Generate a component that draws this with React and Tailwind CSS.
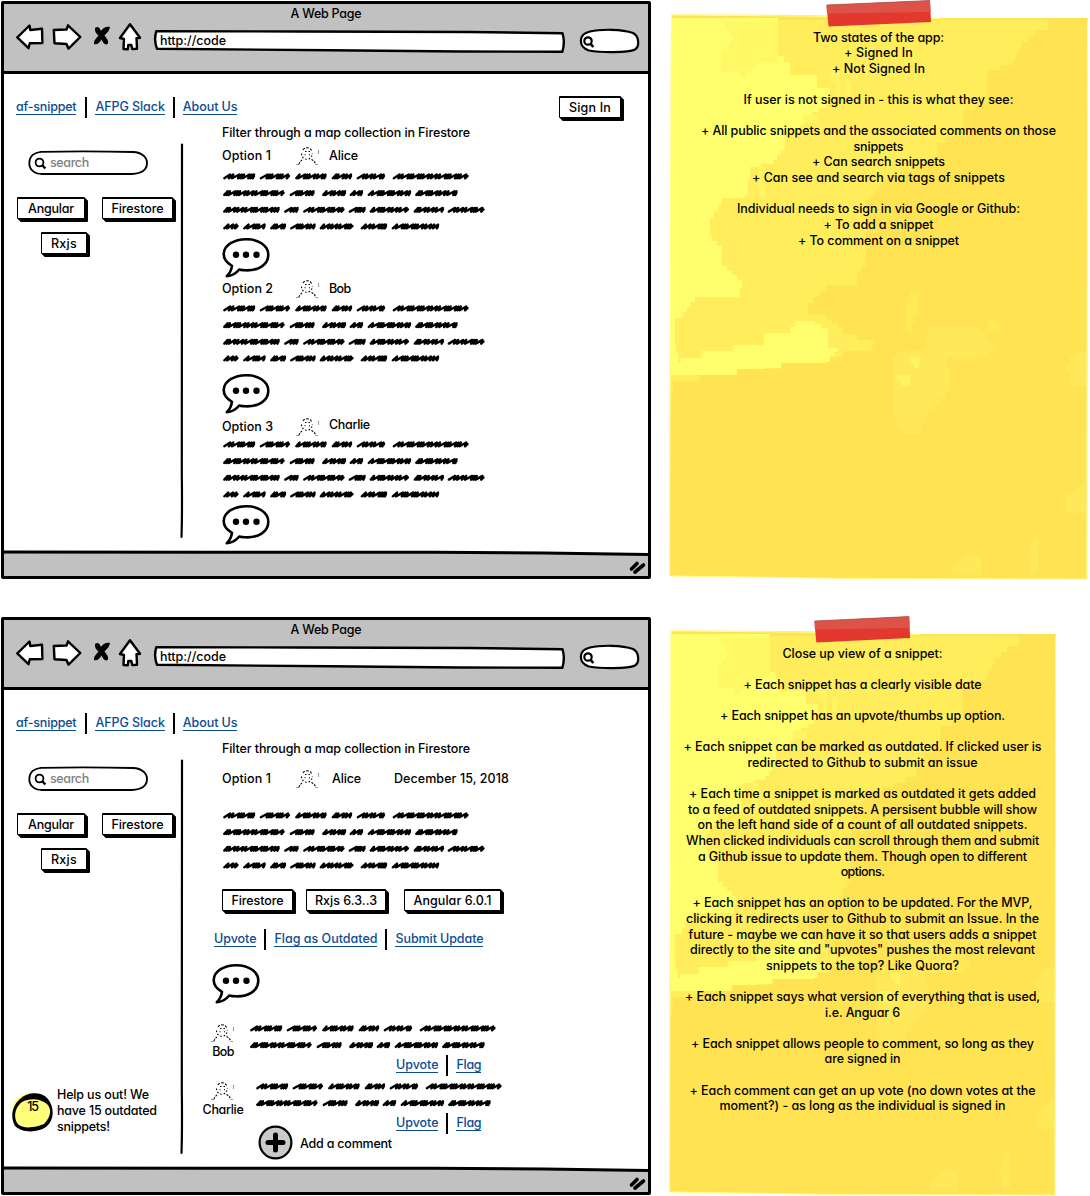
import { useLayoutEffect, useRef, useState } from "react";

/* Text run whose tracking is fitted to a given width. */
function T({ w, className = "", children }) {
  const ref = useRef(null);
  const [tracking, setTracking] = useState(0);
  useLayoutEffect(() => {
    const el = ref.current;
    el.style.letterSpacing = "0px";
    setTracking((w - el.getBoundingClientRect().width) / (el.textContent.length - 0.5));
  }, [w]);
  return (
    <span ref={ref} className={"inline-block whitespace-nowrap " + className} style={{ letterSpacing: tracking + "px" }}>
      {children}
    </span>
  );
}

function Link({ w, children }) {
  return (
    <a className="flex h-[16px] border-b border-[#0b4c94] leading-[15px] text-[#0b4c94]">
      <T w={w}>{children}</T>
    </a>
  );
}

const Sep = () => <span className="h-[21px] w-[2px] bg-black" />;

function Button({ w, className = "", children }) {
  return (
    <div className={"relative flex h-[22px] shrink-0 items-center justify-center rounded-[1px] border-[1.500px] border-t-2 border-black bg-white pt-px shadow-[1px_1px_0_#000,2px_2px_0_#000,3px_3px_0_#000] " + className}>
      <T w={w}>{children}</T>
    </div>
  );
}

/* Scribbled placeholder copy: [start, end] of every word, line by line. */
const WORDS = [
  [[1.5, 33], [38, 68], [73.5, 104.5], [110, 130], [135, 163], [171, 246.5]],
  [[1.5, 62.5], [68, 92.5], [100.5, 124], [128, 141], [146, 189], [193.5, 235.5]],
  [[1.5, 57.5], [62.5, 76.5], [81.5, 122.5], [127, 143.5], [148, 187], [192, 222], [226, 262.5]],
  [[1.5, 16.5], [21.5, 43.5], [48.5, 64], [68.5, 93.5], [98, 131.5], [139, 165], [170, 217]],
];

const RHYTHM = [5.8, 4.2, 7, 3.4, 3.2, 6.6, 3.4, 3.2, 6.4, 4];

function scribble([a, b], y, seed) {
  let x = a + 0.8;
  let i = seed;
  let d = `M${x} ${y + 1.7}`;
  while (x < b - 3.5) {
    const s = Math.min(RHYTHM[i % RHYTHM.length], b - 1 - x);
    d += `L${(x + s).toFixed(1)} ${y - 2}L${(x + s - 1.2).toFixed(1)} ${y + 1.8}`;
    x += s - 1;
    i++;
  }
  return d + `L${b - 1} ${y - 0.5}`;
}

function Scribbles({ lines = 4, className = "" }) {
  const h = lines === 4 ? 62 : 29;
  return (
    <svg className={"block shrink-0 " + className} width="265" height={h} viewBox={`0 0 265 ${h}`} fill="none" stroke="#000" strokeWidth="2.4" strokeLinecap="round" strokeLinejoin="round">
      {WORDS.slice(0, lines).map((line, r) =>
        line.map((word, c) => <path key={r + "-" + c} d={scribble(word, 6.5 + r * 16.7, r * 3 + c * 2)} />)
      )}
    </svg>
  );
}

function Avatar({ className = "" }) {
  return (
    <svg className={"block h-[21px] w-[24px] shrink-0 " + className} viewBox="0 0 24 21" fill="none" stroke="#000" strokeWidth="1.100">
      <path d="M7 5C8 3.500 9.500 2.800 11.300 2.800S14.500 3.500 15.500 5.500" strokeDasharray="2.500 1.500" />
      <path d="M5.500 8.500C5.500 12 8 14.200 11 14.200S16.300 12 16.300 8" strokeDasharray="1.500 2" />
      <path d="M9 6.500h1.500M12.500 6.500h1.500M8.500 9.800h1M13 9.800h1" />
      <path d="M6 15C4.500 16 3.500 17.500 2.800 19.500M15.500 14.500C18 15.500 19 17.500 20 19.500" strokeDasharray="2 1.300" />
      <path d="M0 19.500h3M19.500 19.500h2.500M22.500 5v4" stroke="#999" />
    </svg>
  );
}

function Bubble({ className = "" }) {
  return (
    <svg className={"block h-[43px] w-[50px] shrink-0 " + className} viewBox="0 0 50 43">
      <path d="M24 3.200C35.500 3 46.300 9 46.300 18.700C46.300 29 36 34.800 23.500 34.300C21 34.300 19 34 17.200 33.500C14 37.500 9.500 40 4.800 40.200C8 37 9.500 33.500 10 29.800C5 27 1.700 23.500 1.700 18C2 8.800 12.500 3.300 24 3.200Z" fill="#fff" stroke="#000" strokeWidth="2.600" strokeLinejoin="round" />
      <circle cx="14" cy="18.700" r="3.200" />
      <circle cx="24" cy="18.700" r="3.200" />
      <circle cx="34.500" cy="18.700" r="3.200" />
    </svg>
  );
}

function Toolbar() {
  return (
    <header className="h-[70px] border-b-[3px] border-black bg-[#c1c1c1]">
      <div className="flex h-[19px] items-center justify-center"><T w={71}>A Web Page</T></div>
      <div className="flex h-[32px] pl-[12px]">
        <svg className="mr-[8px] h-[32px] w-[28px]" viewBox="16 23 28 32" fill="#fff" stroke="#000" strokeWidth="2.400" strokeLinejoin="round">
          <path d="M17.300 37.300L29.500 25.500L30.300 30L42 28.700L42.400 43L29.800 43.300L28.500 48.200Z" />
        </svg>
        <svg className="mr-[11px] h-[32px] w-[30px]" viewBox="52 23 30 32" fill="#fff" stroke="#000" strokeWidth="2.400" strokeLinejoin="round">
          <path d="M53.800 30L66.500 29.500L68 25.300L80.300 37L68.500 48.700L66.500 44L54.500 43.300Z" />
        </svg>
        <svg className="mr-[7px] h-[32px] w-[18px]" viewBox="93 23 18 32">
          <path d="M95 28C97 26 99.500 26.500 101 31C103 28 106 26 109.800 27C110 30 107 33 104.500 35.500C106.500 38 108.500 40 108 43.500C105.500 46 103 43 101.500 39.500C99.500 43 97 45 94 44C93.500 41 96 38.500 98.500 35.500C96 33.500 94.500 31 95 28Z" />
        </svg>
        <svg className="mr-[11px] h-[32px] w-[24px]" viewBox="118 23 24 32" fill="#fff" stroke="#000" strokeWidth="2.400" strokeLinejoin="round">
          <path d="M130 24.300L140 37.800L136.500 38.300L137 48.700L132.300 49L131.300 45L128.300 45L127.800 49.300L123.500 49L124 39L120 38Z" />
        </svg>
        <div className="relative mr-[13px] flex h-[32px] w-[413px] items-center pl-[7px]">
          <svg className="absolute inset-0" width="413" height="32" viewBox="153 23 413 32" fill="#fff" stroke="#000" strokeWidth="2.400" strokeLinejoin="round">
            <path d="M156.300 31.200L300 31.500L470 32L562.500 33.300Q565.300 42 562.300 51.800L460 51.500L330 50.300L157 48.800Q153.600 40 156.300 31.200Z" />
          </svg>
          <T w={66} className="relative mt-[3px]">http://code</T>
        </div>
        <svg className="h-[32px] w-[62px]" viewBox="579 23 62 32" fill="#fff" stroke="#000" strokeWidth="2.200">
          <path d="M590 31.500C601 29 622 29 633 33C639 36 640 46 635 49.500C628 53 600 52.500 589 50.500C578 47 578 34 590 31.500Z" />
          <circle cx="588" cy="41" r="3.700" />
          <path d="M590.500 43.500L593.300 47" strokeWidth="2.600" />
        </svg>
      </div>
    </header>
  );
}

function Sidebar({ children }) {
  return (
    <aside className="flex w-[176px] shrink-0 flex-col pt-[26px]">
      <div className="relative ml-[24px] flex h-[26px] w-[121px] items-center pl-[22px]">
        <svg className="absolute inset-0" width="121" height="26" viewBox="0 0 121 26" fill="none" stroke="#000" strokeWidth="1.800">
          <path d="M13 1.800Q60 0.800 105 2C114 2.500 119 7 119 13C119 20 113 23.500 104 24L14 24C6 24 1.300 19.500 1.300 13C1.300 6.500 6 2.500 13 1.800Z" />
          <circle cx="11.500" cy="12.500" r="3.900" />
          <path d="M14.300 15.300L17.300 18.500" strokeWidth="2.400" />
        </svg>
        <T w={39} className="text-[#808080]">search</T>
      </div>
      <div className="mt-[21px] flex pl-[13px]">
        <Button w={46} className="mr-[17px] w-[68px]">Angular</Button>
        <Button w={52} className="w-[71px]">Firestore</Button>
      </div>
      <Button w={26} className="mt-[13px] ml-[37px] w-[46px]">Rxjs</Button>
      {children}
    </aside>
  );
}

function BrowserWindow({ signIn, sidebar, children }) {
  return (
    <section className="mt-[1px] ml-[1px] flex h-[578px] w-[650px] shrink-0 flex-col rounded-[2px] border-[3px] border-black">
      <Toolbar />
      <nav className="mt-[16px] flex h-[34px] shrink-0 items-center pl-[12px]">
        <Link w={60.500}>af-snippet</Link>
        <span className="w-[9px]" /><Sep /><span className="w-[8px]" />
        <Link w={69.500}>AFPG Slack</Link>
        <span className="w-[8px]" /><Sep /><span className="w-[8px]" />
        <Link w={54.500}>About Us</Link>
        {signIn && <Button w={42} className="mr-[27px] ml-auto w-[62px]">Sign In</Button>}
      </nav>
      <div className="flex h-[428px] shrink-0">
        <Sidebar>{sidebar}</Sidebar>
        <svg className="mt-[19px] h-[396px] w-[4px] shrink-0" viewBox="0 0 4 396" fill="none" stroke="#000" strokeWidth="2.200" strokeLinecap="round">
          <path d="M2 1.500Q1.300 200 1.800 330Q2.300 370 1.500 394" />
        </svg>
        <main className="flex min-w-0 flex-1 flex-col pl-[38px]">
          <div className="mt-px flex h-[16px] items-center"><T w={248}>Filter through a map collection in Firestore</T></div>
          {children}
        </main>
      </div>
      <footer className="relative flex min-h-0 flex-1 items-center justify-end bg-[#c1c1c1]">
        <svg className="absolute top-[-3px] left-0" width="644" height="8" viewBox="0 0 644 8">
          <path d="M0 0H644V6L480 4L300 3L0 2Z" fill="#fff" />
          <path d="M0 3L200 3.300L430 3.300L540 4L644 5.500" fill="none" stroke="#000" strokeWidth="3" />
        </svg>
        <svg className="mt-[6px] h-[16px] w-[20px]" viewBox="0 0 20 16" stroke="#000" strokeWidth="3.600" strokeLinecap="round">
          <path d="M3.500 10L9 4.500M7 13L15.500 6" />
        </svg>
      </footer>
    </section>
  );
}

function Snippet({ option, optionW, author, authorW, authorClass = "", className, gap, bubbleGap }) {
  return (
    <>
      <div className={"flex h-[21px] shrink-0 items-center " + className}>
        <div className="w-[74px]"><T w={optionW}>{option}</T></div>
        <Avatar />
        <T w={authorW} className={"ml-[9px] " + authorClass}>{author}</T>
      </div>
      <Scribbles className={gap} />
      <Bubble className={bubbleGap} />
    </>
  );
}

function Comment({ author, w, className, textClass }) {
  return (
    <div className={"flex h-[57px] shrink-0 " + className}>
      <div className="flex w-[42px] shrink-0 flex-col items-center">
        <Avatar />
        <T w={w} className="mt-px leading-[16px]">{author}</T>
      </div>
      <div className="flex flex-col">
        <Scribbles lines={2} className={textClass} />
        <div className="mt-[3px] ml-[152px] flex h-[22px] items-center">
          <Link w={42.500}>Upvote</Link>
          <span className="w-[8px]" /><Sep /><span className="w-[8px]" />
          <Link w={25}>Flag</Link>
        </div>
      </div>
    </div>
  );
}

/* Blocky outline: every slanted segment is turned into small steps. */
function blocks(points) {
  let d = `M${points[0][0]} ${points[0][1]}`;
  for (let i = 1; i < points.length; i++) {
    const [x0, y0] = points[i - 1];
    const [x1, y1] = points[i];
    const n = Math.max(1, Math.ceil(Math.min(Math.abs(x1 - x0) / 4.300, Math.abs(y1 - y0) / 6)));
    for (let k = 1; k <= n; k++) {
      d += `V${(y0 + ((y1 - y0) * k) / n).toFixed(1)}H${(x0 + ((x1 - x0) * k) / n).toFixed(1)}`;
    }
  }
  return d + "Z";
}

const SOFT = blocks([[671, 15], [1048, 20], [1048, 25], [1035, 30], [1022, 42], [1013, 60], [987, 70], [987, 100], [963, 110], [963, 125], [937, 143], [937, 155], [913, 167], [887, 175], [866, 200], [866, 261], [857, 272], [857, 283], [826, 285], [808, 303], [808, 315], [826, 315], [843, 328], [857, 334], [875, 340], [870, 350], [843, 351], [843, 357], [826, 357], [781, 363], [737, 369], [700, 375], [700, 381], [673, 381], [671, 395]]);
const BRIGHT = blocks([[671, 15], [778, 18], [778, 50], [790, 62], [790, 75], [817, 75], [817, 85], [830, 88], [826, 104], [812, 112], [800, 125], [785, 135], [785, 145], [773, 160], [750, 167], [745, 195], [722, 198], [710, 218], [712, 236], [722, 246], [722, 261], [742, 280], [737, 297], [695, 297], [683, 312], [675, 318], [676, 345], [681, 362], [701, 358], [701, 351], [733, 351], [733, 345], [764, 345], [764, 333], [790, 333], [800, 321], [815, 321], [828, 328], [828, 345], [838, 348], [830, 356], [826, 362], [781, 363], [764, 368], [737, 369], [700, 375], [671, 375]]);
const MOTTLE = blocks([[723, 22], [778, 22], [778, 58], [758, 62], [740, 78], [722, 72], [722, 55], [735, 40]]);
const FLECKS = [
  blocks([[928, 327], [981, 327], [995, 347], [981, 356], [947, 357], [950, 369], [946, 392], [928, 410], [919, 429], [903, 434], [893, 417], [897, 357], [915, 351], [924, 350]]),
  blocks([[911, 291], [919, 291], [915, 314], [909, 332], [906, 332], [906, 303]]),
  blocks([[990, 315], [999, 322], [995, 332], [986, 332]]),
  blocks([[1082, 351], [1087, 351], [1087, 386], [1070, 386], [1066, 372], [1073, 356]]),
  blocks([[1085, 482], [1087, 507], [1079, 513], [1066, 513], [1070, 495]]),
  blocks([[964, 555], [981, 555], [981, 575], [952, 575], [955, 567]]),
  blocks([[1034, 537], [1039, 537], [1039, 567], [1030, 575], [1026, 558]]),
];

function Note({ className, tapeClass, tapeW, children }) {
  return (
    <section className={"relative shrink-0 text-center leading-[15.620px] " + className}>
      <svg className="absolute inset-0 h-full w-full" viewBox="669 14 419 566" preserveAspectRatio="none">
        <path d="M671 14.500L800 15L940 18L1088 18L1087.300 579.500L850 578.500L669 576L670 300Z" fill="#ffe353" />
        <path d={SOFT} fill="#ffed5c" />
        <path d={BRIGHT} fill="#ffff6d" />
        <path d={MOTTLE} fill="#fff865" />
        {FLECKS.map((d) => <path key={d} d={d} fill="#ffe95a" />)}
        <path d="M831 70h9v30h-4v-18h-5zM846 82h5v14h-5zM759 167h6v30h-6zM803 115h15v8h-15zM910 357h9v11h-5v-5h-5zM897 375h13v11h-9v-6h-4z" fill="#fff563" />
        <path d="M671.500 15L800 16L940 18.500M1087.500 20L1086.800 579M669.600 576L670.500 300L671.500 15M669 576L850 578.500L1087 579" fill="none" stroke="#ffff88" strokeWidth="1" />
        <path d="M780 13.500L940 13.500L1090 13.500V17.800L940 17.800L870 16.500Z" fill="#fff" />
      </svg>
      <svg className={"absolute h-[27px] " + tapeClass} width={tapeW} height="27" viewBox="0 0 106 27" preserveAspectRatio="none">
        <path d="M0.500 5L104 0.500L105 22L2.500 26.500Z" fill="#e3382d" />
        <path d="M0.500 5L104 0.500L104.500 12L1 13.500Z" fill="#dd5249" />
        <path d="M0.500 5L104 0.500" stroke="#9d5a50" strokeWidth="0.700" />
      </svg>
      <div className="relative">{children}</div>
    </section>
  );
}

function Lines({ items }) {
  return items.map(([text, w], i) =>
    text ? <p key={i} className="flex h-[15.620px] justify-center"><T w={w}>{text}</T></p> : <div key={i} className="h-[15.620px]" />
  );
}

const STATES = [
  ["Two states of the app:", 131], ["+ Signed In", 69], ["+ Not Signed In", 93], [""],
  ["If user is not signed in - this is what they see:", 270], [""],
  ["+ All public snippets and the associated comments on those", 355], ["snippets", 50],
  ["+ Can search snippets", 133], ["+ Can see and search via tags of snippets", 253], [""],
  ["Individual needs to sign in via Google or Github:", 283], ["+ To add a snippet", 110], ["+ To comment on a snippet", 161],
];

const CLOSE_UP = [
  ["Close up view of a snippet:", 160], [""],
  ["+ Each snippet has a clearly visible date", 238], [""],
  ["+ Each snippet has an upvote/thumbs up option.", 285], [""],
  ["+ Each snippet can be marked as outdated. If clicked user is", 358], ["redirected to Github to submit an issue", 230], [""],
  ["+ Each time a snippet is marked as outdated it gets added", 347], ["to a feed of outdated snippets. A persisent bubble will show", 349],
  ["on the left hand side of a count of all outdated snippets.", 330], ["When clicked individuals can scroll through them and submit", 353],
  ["a Github issue to update them. Though open to different", 329], ["options.", 44], [""],
  ["+ Each snippet has an option to be updated. For the MVP,", 340], ["clicking it redirects user to Github to submit an Issue. In the", 353],
  ["future - maybe we can have it so that users adds a snippet", 348], ["directly to the site and \"upvotes\" pushes the most relevant", 345],
  ["snippets to the top? Like Quora?", 193], [""],
  ["+ Each snippet says what version of everything that is used,", 355], ["i.e. Anguar 6", 75], [""],
  ["+ Each snippet allows people to comment, so long as they", 343], ["are signed in", 76], [""],
  ["+ Each comment can get an up vote (no down votes at the", 346], ["moment?) - as long as the individual is signed in", 286],
];

function OutdatedNotice() {
  return (
    <div className="mt-[217px] flex pl-[8px]">
      <div className="relative mt-[5px] flex h-[40px] w-[41px] shrink-0 items-start justify-center pt-[7px] leading-[16px]">
        <svg className="absolute inset-0" width="41" height="40" viewBox="0 0 41 40">
          <ellipse cx="19.500" cy="18.500" rx="19.500" ry="17.500" fill="#ffff7a" />
          <path fillRule="evenodd" d="M8 7C15 0 29 -1 36 7C43 16 42 29 34 35C25 41 10 41 3 34C-2 25 0 14 8 7ZM10 10C2 16 1 28 7 33C14 38 27 34 32 32C39 25 40 17 35 12C28 6 17 6 10 10Z" fill="#000" />
        </svg>
        <T w={11} className="relative">15</T>
      </div>
      <div className="ml-[4px] flex flex-col items-start leading-[16px]">
        <T w={92}>Help us out! We</T>
        <T w={100}>have 15 outdated</T>
        <T w={53}>snippets!</T>
      </div>
    </div>
  );
}

export default function App() {
  return (
    <div className="h-[1196px] w-[1090px] overflow-hidden bg-white text-[12.500px] font-[450] leading-[16px] text-black [font-family:Inter,'Open_Sans',sans-serif] [font-feature-settings:'cv11']">
      <div className="flex h-[616px]">
        <BrowserWindow signIn>
          <Snippet option="Option 1" optionW={49} author="Alice" authorW={29} className="mt-[4px]" gap="mt-[4px]" bubbleGap="mt-[4px]" />
          <Snippet option="Option 2" optionW={51} author="Bob" authorW={22} className="-mt-px" gap="mt-[3px]" bubbleGap="mt-[8px]" />
          <Snippet option="Option 3" optionW={51} author="Charlie" authorW={41} authorClass="-mt-[3px]" className="mt-[1px]" gap="mt-[1px]" bubbleGap="mt-[3px]" />
        </BrowserWindow>
        <Note className="mt-[14px] ml-[18px] h-[566px] w-[419px] pt-[15.600px]" tapeClass="top-[-14px] left-[157px]" tapeW={106}>
          <Lines items={STATES} />
        </Note>
      </div>
      <div className="flex h-[580px]">
        <BrowserWindow sidebar={<OutdatedNotice />}>
          <div className="mt-[11px] flex h-[21px] shrink-0 items-center">
            <div className="w-[74px]"><T w={49}>Option 1</T></div>
            <Avatar />
            <T w={29} className="ml-[12px]">Alice</T>
            <T w={115} className="ml-[33px]">December 15, 2018</T>
          </div>
          <Scribbles className="mt-[20px]" />
          <div className="mt-[18px] flex shrink-0">
            <Button w={52} className="w-[71px]">Firestore</Button>
            <Button w={62} className="ml-[13px] w-[80px]">Rxjs 6.3..3</Button>
            <Button w={78} className="ml-[18px] w-[97px]">Angular 6.0.1</Button>
          </div>
          <div className="-ml-[8px] mt-[17px] flex h-[22px] shrink-0 items-center">
            <Link w={42.500}>Upvote</Link>
            <span className="w-[8px]" /><Sep /><span className="w-[8px]" />
            <Link w={103}>Flag as Outdated</Link>
            <span className="w-[8px]" /><Sep /><span className="w-[8px]" />
            <Link w={88}>Submit Update</Link>
          </div>
          <Bubble className="-ml-[10px] mt-[12px]" />
          <Comment author="Bob" w={22} className="-ml-[20px] mt-[17px]" textClass="ml-[5px]" />
          <Comment author="Charlie" w={41} className="-ml-[20px] mt-[1px]" textClass="ml-[11px]" />
          <div className="-mt-[12px] ml-[36px] flex shrink-0 items-center">
            <svg className="h-[35px] w-[35px]" viewBox="0 0 35 35">
              <circle cx="17.500" cy="17.500" r="15.900" fill="#cacaca" stroke="#000" strokeWidth="2.200" />
              <path d="M17.500 10V25M10 17.500H25" stroke="#000" strokeWidth="5" strokeLinecap="round" />
            </svg>
            <T w={92} className="mt-[2px] ml-[7px]">Add a comment</T>
          </div>
        </BrowserWindow>
        <Note className="mt-[14px] ml-[18px] h-[566px] w-[387px] pt-[15.600px]" tapeClass="top-[-14px] left-[145px]" tapeW={97}>
          <Lines items={CLOSE_UP} />
        </Note>
      </div>
    </div>
  );
}
